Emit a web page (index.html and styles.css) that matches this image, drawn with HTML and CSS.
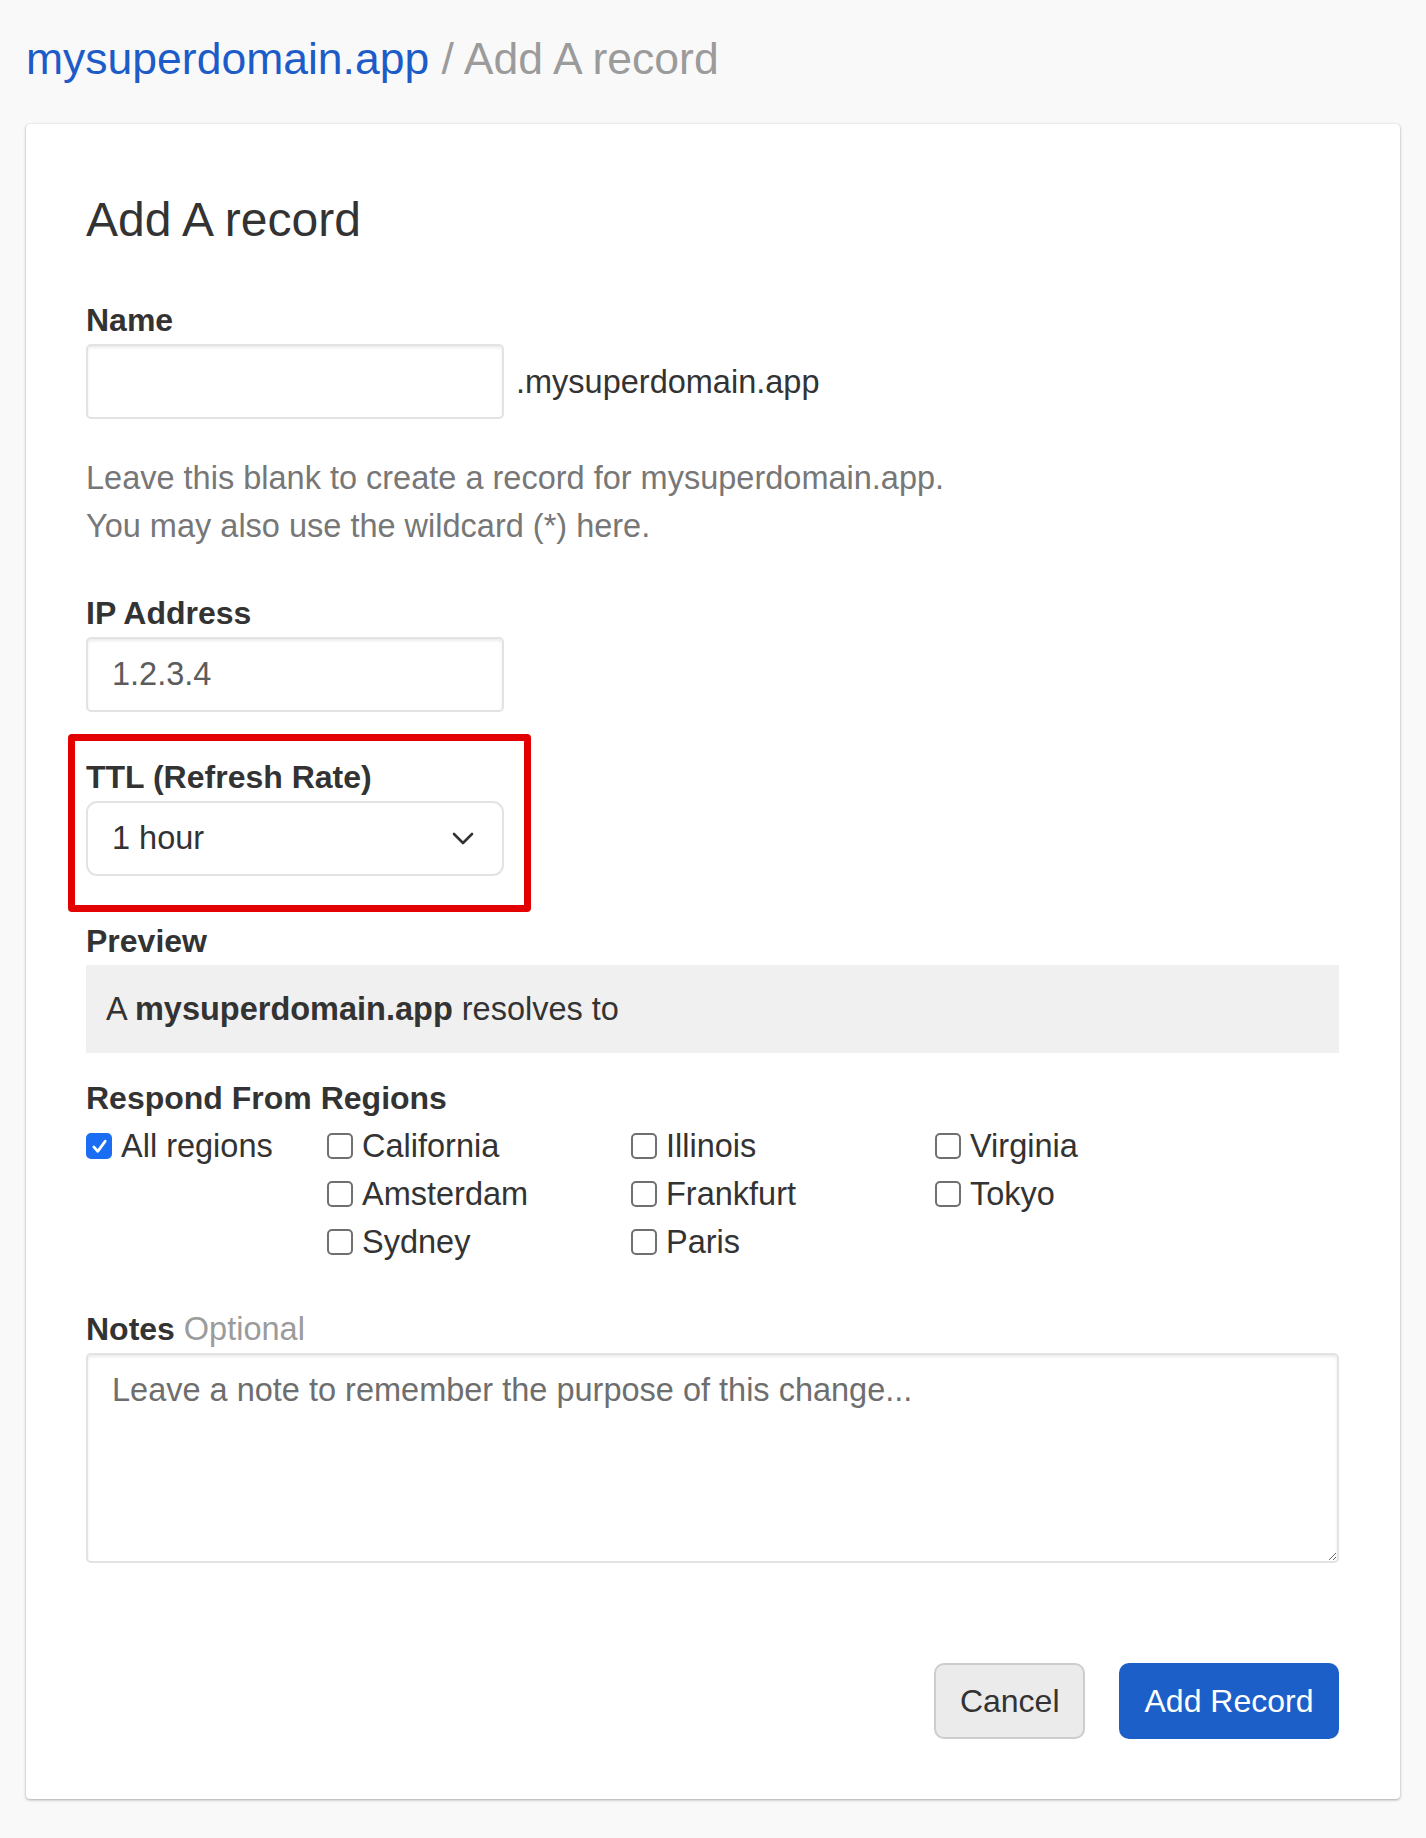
FILE: index.html
```html
<!DOCTYPE html>
<html lang="en">
<head>
<meta charset="utf-8">
<title>Add A record</title>
<link rel="stylesheet" href="styles.css">
</head>
<body>
<div class="page">
  <h1 class="crumbs"><a class="crumb-link" href="#">mysuperdomain.app</a> / Add A record</h1>
  <form class="card">
    <h2 class="card-title">Add A record</h2>

    <div class="field field-name">
      <label class="label" for="name">Name</label>
      <div class="name-row">
        <input class="text-input" id="name" type="text">
        <span class="suffix">.mysuperdomain.app</span>
      </div>
      <p class="help">Leave this blank to create a record for mysuperdomain.app.<br>You may also use the wildcard (*) here.</p>
    </div>

    <div class="field">
      <label class="label" for="ip">IP Address</label>
      <input class="text-input" id="ip" type="text" placeholder="1.2.3.4">
    </div>

    <div class="field field-ttl">
      <span class="label">TTL (Refresh Rate)</span>
      <div class="select">
        <span class="select-value">1 hour</span>
        <svg class="chevron" width="22" height="13" viewBox="0 0 22 13" aria-hidden="true"><polyline points="2,2 11,11 20,2" fill="none" stroke="#333" stroke-width="2.6" stroke-linecap="round" stroke-linejoin="round"/></svg>
      </div>
    </div>

    <div class="field field-preview">
      <span class="label">Preview</span>
      <div class="preview">A <strong>mysuperdomain.app</strong> resolves to</div>
    </div>

    <div class="field field-regions">
      <span class="label">Respond From Regions</span>
      <div class="regions">
        <div class="region-all">
          <label class="check"><span class="box box-checked"><svg width="21" height="21" viewBox="0 0 24 24" aria-hidden="true"><polyline points="5.5,12.5 10,17.5 18.5,6" fill="none" stroke="#fff" stroke-width="3.2" stroke-linecap="round" stroke-linejoin="round"/></svg></span>All regions</label>
        </div>
        <div class="region-grid">
          <label class="check"><span class="box"></span>California</label>
          <label class="check"><span class="box"></span>Illinois</label>
          <label class="check"><span class="box"></span>Virginia</label>
          <label class="check"><span class="box"></span>Amsterdam</label>
          <label class="check"><span class="box"></span>Frankfurt</label>
          <label class="check"><span class="box"></span>Tokyo</label>
          <label class="check"><span class="box"></span>Sydney</label>
          <label class="check"><span class="box"></span>Paris</label>
        </div>
      </div>
    </div>

    <div class="field field-notes">
      <label class="label" for="notes">Notes <span class="optional">Optional</span></label>
      <textarea class="textarea" id="notes" placeholder="Leave a note to remember the purpose of this change..."></textarea>
    </div>

    <div class="actions">
      <button type="button" class="btn btn-cancel">Cancel</button>
      <button type="button" class="btn btn-primary">Add Record</button>
    </div>
  </form>
</div>
</body>
</html>
```

FILE: styles.css
```css
*,
*::before,
*::after {
  box-sizing: border-box;
}

html,
body {
  margin: 0;
  padding: 0;
}

body {
  background: #f9f9f9;
  font-family: "Liberation Sans", Arial, Helvetica, sans-serif;
  color: #333;
}

.page {
  padding: 26px 26px 28px;
}

.crumbs {
  margin: 0 0 32px;
  font-size: 44.5px;
  line-height: 66px;
  font-weight: normal;
  color: #9b9b9b;
}

.crumb-link {
  color: #1d5cc8;
  text-decoration: none;
}

.card {
  display: block;
  background: #fff;
  border-radius: 4px;
  box-shadow: 0 1px 3px rgba(0, 0, 0, 0.32), 0 0 1px rgba(0, 0, 0, 0.12);
  padding: 68px 61px 60px 60px;
}

.card-title {
  margin: 0 0 48px;
  font-size: 48px;
  line-height: 56px;
  font-weight: normal;
  color: #333;
}

.field {
  margin-bottom: 41px;
}

.field-name {
  margin-bottom: 39px;
}

.field-preview {
  margin-bottom: 21px;
}

.field-regions {
  margin-bottom: 39px;
}

.field-notes {
  margin-bottom: 100px;
}

.label {
  display: block;
  font-size: 32px;
  line-height: 48px;
  font-weight: bold;
  color: #333;
}

.optional {
  font-weight: normal;
  color: #9b9b9b;
  font-size: 32.5px;
}

.name-row {
  display: flex;
  align-items: center;
  gap: 12px;
}

.text-input {
  display: block;
  width: 418px;
  height: 75px;
  margin: 0;
  padding: 0 24px;
  border: 2px solid #e3e3e3;
  border-radius: 5px;
  box-shadow: inset 0 2px 3px rgba(0, 0, 0, 0.08);
  background: #fff;
  font-family: "Liberation Sans", Arial, sans-serif;
  font-size: 32.5px;
  color: #555;
  outline: none;
}

.text-input::placeholder {
  color: #5c5c5c;
}

.suffix {
  font-size: 32.5px;
  line-height: 48px;
  color: #333;
}

.help {
  margin: 35px 0 0;
  font-size: 32.5px;
  line-height: 48px;
  color: #777;
}

.field-ttl {
  position: relative;
}

.field-ttl::after {
  content: "";
  position: absolute;
  left: -18px;
  top: -19px;
  width: 463px;
  height: 178px;
  border: 7px solid #e30000;
  border-radius: 4px;
  pointer-events: none;
}

.select {
  display: flex;
  align-items: center;
  justify-content: space-between;
  width: 418px;
  height: 75px;
  padding: 0 28px 0 24px;
  border: 2px solid #e3e3e3;
  border-radius: 11px;
  background: #fff;
  font-size: 32.5px;
  color: #333;
}

.chevron {
  display: block;
}

.preview {
  background: #f0f0f0;
  padding: 20px 20px;
  font-size: 32.5px;
  line-height: 48px;
  color: #333;
}

.preview strong {
  font-weight: bold;
}

.regions {
  display: flex;
}

.region-all {
  width: 241px;
  flex: none;
}

.region-grid {
  display: grid;
  grid-template-columns: repeat(3, 304px);
}

.check {
  display: flex;
  align-items: center;
  gap: 9px;
  font-size: 32.5px;
  line-height: 48px;
  color: #333;
}

.box {
  display: flex;
  align-items: center;
  justify-content: center;
  flex: none;
  width: 26px;
  height: 26px;
  border: 2px solid #707070;
  border-radius: 5px;
  background: #fff;
}

.box-checked {
  background: #1b6ef3;
  border-color: #1b6ef3;
}

.box-checked svg {
  display: block;
}

.textarea {
  display: block;
  width: 100%;
  height: 210px;
  margin: 0;
  padding: 11px 24px;
  border: 2px solid #e3e3e3;
  border-radius: 5px;
  box-shadow: inset 0 2px 3px rgba(0, 0, 0, 0.08);
  background: #fff;
  font-family: "Liberation Sans", Arial, sans-serif;
  font-size: 32.5px;
  line-height: 48px;
  color: #333;
  outline: none;
}

.textarea::placeholder {
  color: #6e6e6e;
}

.actions {
  display: flex;
  justify-content: flex-end;
  gap: 34px;
}

.btn {
  height: 76px;
  padding: 0 23.5px;
  border-radius: 10px;
  font-family: "Liberation Sans", Arial, sans-serif;
  font-size: 32px;
  cursor: pointer;
}

.btn-cancel {
  background: #ebebeb;
  border: 2px solid #cdcdcd;
  color: #333;
}

.btn-primary {
  background: #1d5fc8;
  border: 2px solid #1d5fc8;
  color: #fff;
}
```
